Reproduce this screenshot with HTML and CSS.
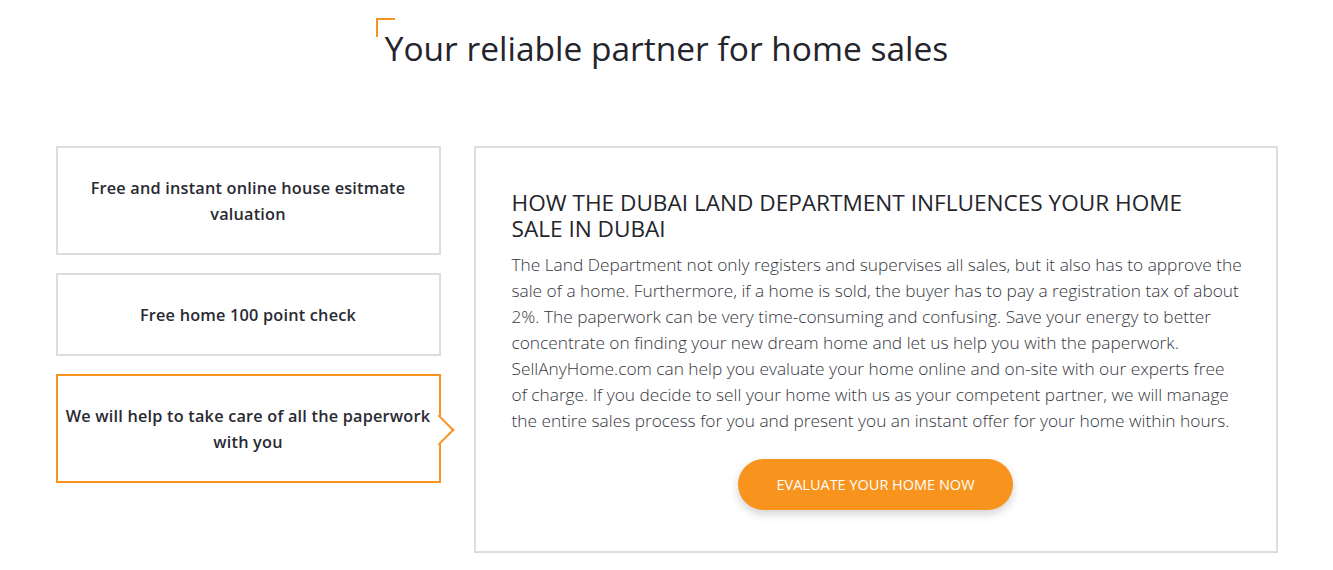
FILE: index.html
```html
<!DOCTYPE html>
<html lang="en">
<head>
<meta charset="utf-8">
<title>Your reliable partner for home sales</title>
<link rel="stylesheet" href="styles.css">
</head>
<body>
<section class="partner">
  <h1 class="title"><span class="title-text">Your reliable partner for home sales</span></h1>
  <div class="content">
    <div class="tabs">
      <div class="tab">Free and instant online house esitmate valuation</div>
      <div class="tab tab-short">Free home 100 point check</div>
      <div class="tab tab-active">We will help to take care of all the paperwork with you</div>
    </div>
    <div class="panel">
      <h2 class="panel-title">HOW THE DUBAI LAND DEPARTMENT INFLUENCES YOUR HOME SALE IN DUBAI</h2>
      <p class="panel-text">The Land Department not only registers and supervises all sales, but it also has to approve the sale of a home. Furthermore, if a home is sold, the buyer has to pay a registration tax of about 2%. The paperwork can be very time-consuming and confusing. Save your energy to better concentrate on finding your new dream home and let us help you with the paperwork. SellAnyHome.com can help you evaluate your home online and on-site with our experts free of charge. If you decide to sell your home with us as your competent partner, we will manage the entire sales process for you and present you an instant offer for your home within hours.</p>
      <div class="btn-row"><a class="btn" href="#">EVALUATE YOUR HOME NOW</a></div>
    </div>
  </div>
</section>
</body>
</html>
```

FILE: styles.css
```css
* { box-sizing: border-box; }
html, body { margin: 0; padding: 0; background: #fff; }
body {
  font-family: "Open Sans", Lato, sans-serif;
  color: #2a2a33;
}
.partner {
  width: 1222px;
  margin: 0 auto;
  padding-top: 18px;
}
.title {
  margin: 0;
  text-align: center;
  font-weight: 400;
  font-size: 33.5px;
  line-height: 60px;
  color: #24242c;
}
.title-text {
  position: relative;
  display: inline-block;
  padding: 0 9px;
}
.title-text::before {
  content: "";
  position: absolute;
  left: 0;
  top: 0;
  width: 17px;
  height: 17px;
  border-top: 2px solid #f7931e;
  border-left: 2px solid #f7931e;
}
.content {
  display: flex;
  gap: 33px;
  margin-top: 68px;
  align-items: flex-start;
}
.tabs {
  width: 385px;
  display: flex;
  flex-direction: column;
  gap: 18px;
}
.tab {
  position: relative;
  border: 2px solid #dddddd;
  min-height: 109px;
  display: flex;
  align-items: center;
  justify-content: center;
  text-align: center;
  padding: 0 30px;
  font-weight: 600;
  font-size: 16.3px;
  letter-spacing: 0.2px;
  line-height: 26px;
  color: #2a2a33;
}
.tab-short { min-height: 83px; }
.tab-active {
  border-color: #f7931e;
  padding: 0 4px;
}
.tab-active::after {
  content: "";
  position: absolute;
  right: -11px;
  top: 50%;
  width: 20px;
  height: 20px;
  margin-top: -10px;
  background: #fff;
  border-top: 2px solid #f7931e;
  border-right: 2px solid #f7931e;
  transform: rotate(45deg);
}
.panel {
  width: 804px;
  border: 2px solid #dddddd;
  padding: 42px 33px 40px 36px;
  height: 407px;
}
.panel-title {
  margin: 0;
  max-width: 700px;
  font-weight: 400;
  font-size: 22.6px;
  line-height: 26px;
  color: #24242c;
}
.panel-text {
  margin: 10px 0 0 0;
  font-weight: 300;
  font-size: 17.3px;
  line-height: 26px;
  color: #363640;
}
.btn-row {
  display: flex;
  justify-content: center;
  margin-top: 25px;
  padding-right: 3px;
}
.btn {
  display: inline-flex;
  align-items: center;
  justify-content: center;
  width: 275px;
  height: 51px;
  border-radius: 26px;
  background: #f8931d;
  color: #fff;
  text-decoration: none;
  font-size: 14.5px;
  font-weight: 400;
  box-shadow: 0 4px 10px rgba(0,0,0,0.18);
}
```
